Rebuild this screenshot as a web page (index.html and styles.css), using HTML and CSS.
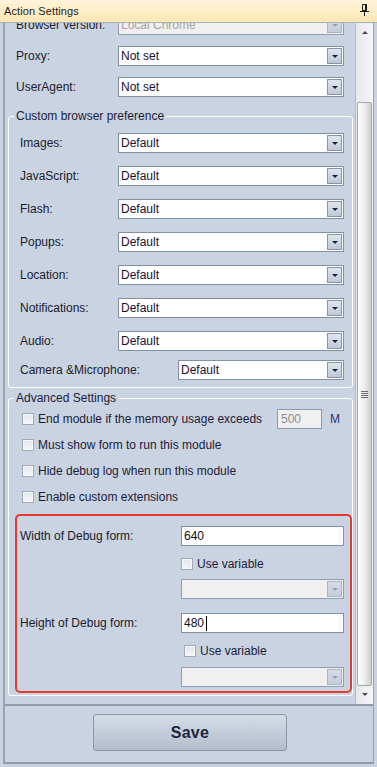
FILE: index.html
```html
<!DOCTYPE html>
<html>
<head>
<meta charset="utf-8">
<title>Action Settings</title>
<link rel="stylesheet" href="styles.css">
</head>
<body>
<div class="titlebar">
  <span class="title">Action Settings</span>
  <svg class="pin" width="9" height="12" viewBox="0 0 9 12">
    <path d="M2.5 0.5h4v6h-4z" fill="none" stroke="#1a1a1a" stroke-width="1"/>
    <path d="M5.5 1v5" stroke="#1a1a1a" stroke-width="1"/>
    <path d="M0 7.5h9" stroke="#1a1a1a" stroke-width="1"/>
    <path d="M4.5 8v4" stroke="#1a1a1a" stroke-width="1"/>
  </svg>
</div>
<div class="frame">
  <div class="scrollarea">
    <div class="viewport">
      <div class="content">
        <div class="row top">
          <span class="lbl">Browser version:</span>
          <div class="combo disabled w226"><span class="val">Local Chrome</span><span class="btn"><i></i></span></div>
        </div>
        <div class="row top">
          <span class="lbl">Proxy:</span>
          <div class="combo w226"><span class="val">Not set</span><span class="btn"><i></i></span></div>
        </div>
        <div class="row top">
          <span class="lbl">UserAgent:</span>
          <div class="combo w226"><span class="val">Not set</span><span class="btn"><i></i></span></div>
        </div>

        <fieldset class="group g1">
          <legend>Custom browser preference</legend>
          <div class="gbody pref">
            <div class="row"><span class="lbl">Images:</span><div class="combo w226"><span class="val">Default</span><span class="btn"><i></i></span></div></div>
            <div class="row"><span class="lbl">JavaScript:</span><div class="combo w226"><span class="val">Default</span><span class="btn"><i></i></span></div></div>
            <div class="row"><span class="lbl">Flash:</span><div class="combo w226"><span class="val">Default</span><span class="btn"><i></i></span></div></div>
            <div class="row"><span class="lbl">Popups:</span><div class="combo w226"><span class="val">Default</span><span class="btn"><i></i></span></div></div>
            <div class="row"><span class="lbl">Location:</span><div class="combo w226"><span class="val">Default</span><span class="btn"><i></i></span></div></div>
            <div class="row"><span class="lbl">Notifications:</span><div class="combo w226"><span class="val">Default</span><span class="btn"><i></i></span></div></div>
            <div class="row"><span class="lbl">Audio:</span><div class="combo w226"><span class="val">Default</span><span class="btn"><i></i></span></div></div>
            <div class="row camera"><span class="lbl">Camera &amp;Microphone:</span><div class="combo w166"><span class="val">Default</span><span class="btn"><i></i></span></div></div>
          </div>
        </fieldset>

        <fieldset class="group g2">
          <legend>Advanced Settings</legend>
          <div class="gbody adv">
            <div class="chkrow"><span class="cb"></span><span class="ctext wide">End module if the memory usage exceeds</span><span class="num">500</span><span class="unit">M</span></div>
            <div class="chkrow"><span class="cb"></span><span class="ctext">Must show form to run this module</span></div>
            <div class="chkrow"><span class="cb"></span><span class="ctext">Hide debug log when run this module</span></div>
            <div class="chkrow"><span class="cb"></span><span class="ctext">Enable custom extensions</span></div>

            <div class="redbox">
              <div class="frow"><span class="flbl">Width of Debug form:</span><div class="tinput">640</div></div>
              <div class="vrow v1"><span class="cb"></span><span class="ctext">Use variable</span></div>
              <div class="combo disabled w163 dcombo c1"><span class="val"></span><span class="btn"><i></i></span></div>
              <div class="frow f2"><span class="flbl">Height of Debug form:</span><div class="tinput">480<span class="caret"></span></div></div>
              <div class="vrow v2"><span class="cb"></span><span class="ctext">Use variable</span></div>
              <div class="combo disabled w163 dcombo c2"><span class="val"></span><span class="btn"><i></i></span></div>
            </div>
          </div>
        </fieldset>
      </div>
    </div>
    <div class="scrollbar">
      <div class="sbtn"><i class="up"></i></div>
      <div class="track">
        <div class="thumb"><span class="grip"></span></div>
      </div>
      <div class="sbtn"><i class="down"></i></div>
    </div>
  </div>
  <div class="bottom">
    <button class="save">Save</button>
  </div>
</div>
</body>
</html>
```

FILE: styles.css
```css
* { box-sizing: border-box; }

html, body {
  margin: 0;
  padding: 0;
}

body {
  width: 377px;
  height: 767px;
  overflow: hidden;
  background: #c9d2e0;
  font-family: "Liberation Sans", Arial, sans-serif;
  font-size: 12px;
  color: #1c1c2c;
}

/* title bar */
.titlebar {
  height: 23px;
  display: flex;
  align-items: center;
  justify-content: space-between;
  padding: 0 8px 1px 4px;
  background: linear-gradient(#fff5da, #fde6b3);
  border-bottom: 1px solid #a9b1bd;
}

.title {
  font-size: 11px;
  color: #1e1e1e;
  letter-spacing: 0.1px;
}

.pin { display: block; margin-top: -2px; }

/* outer frame */
.frame {
  margin-left: 3px;
  width: 371px;
  border-left: 2px solid #97a2b2;
  border-right: 1px solid #97a2b2;
  border-bottom: 2px solid #8f9aab;
  background: #c9d3e2;
}

.scrollarea {
  display: flex;
  height: 681px;
}

.viewport {
  flex: 1;
  overflow: hidden;
}

.content {
  margin-top: -8px;
  padding-left: 3px;
  display: flex;
  flex-direction: column;
  gap: 11px;
}

/* rows */
.row {
  display: flex;
  align-items: center;
  height: 20px;
}

.row.top { padding-left: 8px; }
.row.top .lbl { width: 102px; }

.lbl { white-space: nowrap; }

/* combo */
.combo {
  height: 20px;
  display: flex;
  align-items: center;
  border: 1px solid #8190a6;
  background: #fff;
  font-size: 12px;
  color: #1a1030;
}

.w226 { width: 226px; }
.w166 { width: 166px; }
.w163 { width: 163px; }

.combo .val {
  flex: 1;
  padding-left: 2px;
  white-space: nowrap;
  overflow: hidden;
}

.combo .btn {
  width: 15px;
  height: 16px;
  margin: 1px 1px 1px 0;
  border: 1px solid #8694a9;
  background: linear-gradient(#dfe5ee, #bfc9d7);
  display: flex;
  align-items: center;
  justify-content: center;
}

.combo .btn i {
  display: block;
  width: 0;
  height: 0;
  border-left: 3px solid transparent;
  border-right: 3px solid transparent;
  border-top: 3px solid #18243c;
  margin-top: 1px;
}

.combo.disabled {
  background: #f0f0f0;
  border-color: #919db0;
  color: #a3a3a3;
}

.combo.disabled .btn {
  border-color: #aab4c2;
  background: linear-gradient(#d6dce5, #c5cdd9);
}

.combo.disabled .btn i { border-top-color: #98a2b1; }

/* groups */
.group {
  margin: 0;
  width: 345px;
  min-width: 0;
  padding: 0;
  border: 1px solid #ffffff;
  border-radius: 3px;
}

.group legend {
  margin-left: 5px;
  padding: 0 2px;
  line-height: 14px;
  font-size: 12px;
  color: #1c2236;
}

.g1 { margin-top: 1px; }
.g2 { margin-top: -8px; }

.gbody {
  display: flex;
  flex-direction: column;
}

.pref {
  padding: 10px 0 7px 11px;
  gap: 13px;
}

.pref .lbl { width: 98px; }
.pref .camera { margin-top: -4px; }
.pref .camera .lbl { width: 158px; }

.adv {
  padding: 4px 0 2px 6px;
  gap: 6px;
}

/* checkboxes */
.cb {
  width: 12px;
  height: 12px;
  flex: none;
  border: 1px solid #a0aab8;
  background: linear-gradient(#e1e6ed, #f4f6f9);
  box-shadow: inset 0 0 0 1px #f7f8fa;
}

.chkrow {
  height: 20px;
  display: flex;
  align-items: center;
  padding-left: 7px;
  white-space: nowrap;
}

.chkrow .ctext { margin-left: 4px; color: #221c38; }
.chkrow .ctext.wide { width: 231px; }

.num {
  width: 45px;
  height: 20px;
  margin-left: 8px;
  border: 1px solid #8e9aad;
  background: #f0f0f0;
  color: #8d8d8d;
  padding-left: 3px;
  display: flex;
  align-items: center;
}

.unit {
  margin-left: 8px;
  color: #2a3270;
}

/* red highlighted box */
.redbox {
  margin-top: 1px;
  width: 337px;
  border: 2px solid #e43a2f;
  border-radius: 5px;
  padding: 10px 0 4px 3px;
  display: flex;
  flex-direction: column;
}

.frow {
  display: flex;
  align-items: center;
  height: 20px;
}

.flbl { width: 161px; white-space: nowrap; }

.tinput {
  width: 163px;
  height: 20px;
  border: 1px solid #8190a6;
  background: #fff;
  padding-left: 2px;
  display: flex;
  align-items: center;
  color: #111;
}

.caret {
  display: inline-block;
  width: 1px;
  height: 15px;
  background: #000;
  margin-left: 2px;
}

.vrow {
  height: 16px;
  display: flex;
  align-items: center;
  margin-top: 10px;
}

.vrow .ctext { margin-left: 4px; color: #221c38; }
.vrow.v1 { padding-left: 161px; }
.vrow.v2 { padding-left: 164px; }

.dcombo { margin-left: 161px; }
.dcombo.c1 { margin-top: 7px; }
.dcombo.c2 { margin-top: 8px; }
.frow.f2 { margin-top: 14px; }

/* scrollbar */
.scrollbar {
  width: 18px;
  display: flex;
  flex-direction: column;
  border-left: 1px solid #b4bcc8;
  background: linear-gradient(90deg, #e6e7e9, #f6f6f7);
}

.sbtn {
  height: 17px;
  display: flex;
  align-items: center;
  justify-content: center;
}

.sbtn i {
  display: block;
  width: 0;
  height: 0;
  border-left: 3px solid transparent;
  border-right: 3px solid transparent;
}

.sbtn i.up { border-bottom: 3px solid #4a4a4a; margin-top: 2px; }
.sbtn i.down { border-top: 3px solid #4a4a4a; margin-top: -2px; }

.track {
  flex: 1;
  padding: 62px 0 0 1px;
}

.thumb {
  width: 15px;
  height: 584px;
  border: 1px solid #a6a6a6;
  border-radius: 2px;
  background: linear-gradient(90deg, #fefefe, #ececec 50%, #cfcfcf);
  display: flex;
  align-items: center;
  justify-content: center;
}

.grip {
  width: 7px;
  height: 7px;
  margin-left: -1px;
  background: repeating-linear-gradient(#6f6f6f 0 1px, transparent 1px 2px);
}

/* bottom panel */
.bottom {
  height: 58px;
  border-top: 2px solid #8f9aab;
  display: flex;
  justify-content: center;
  align-items: flex-start;
  padding: 8px 0 0 2px;
}

.save {
  width: 194px;
  height: 37px;
  border: 1px solid #8b97a9;
  border-radius: 3px;
  background: linear-gradient(#d5dce7, #b2bdcd);
  font-family: "Liberation Sans", Arial, sans-serif;
  font-weight: bold;
  font-size: 16px;
  color: #1c283b;
  letter-spacing: 0.3px;
  padding: 0;
}
```
